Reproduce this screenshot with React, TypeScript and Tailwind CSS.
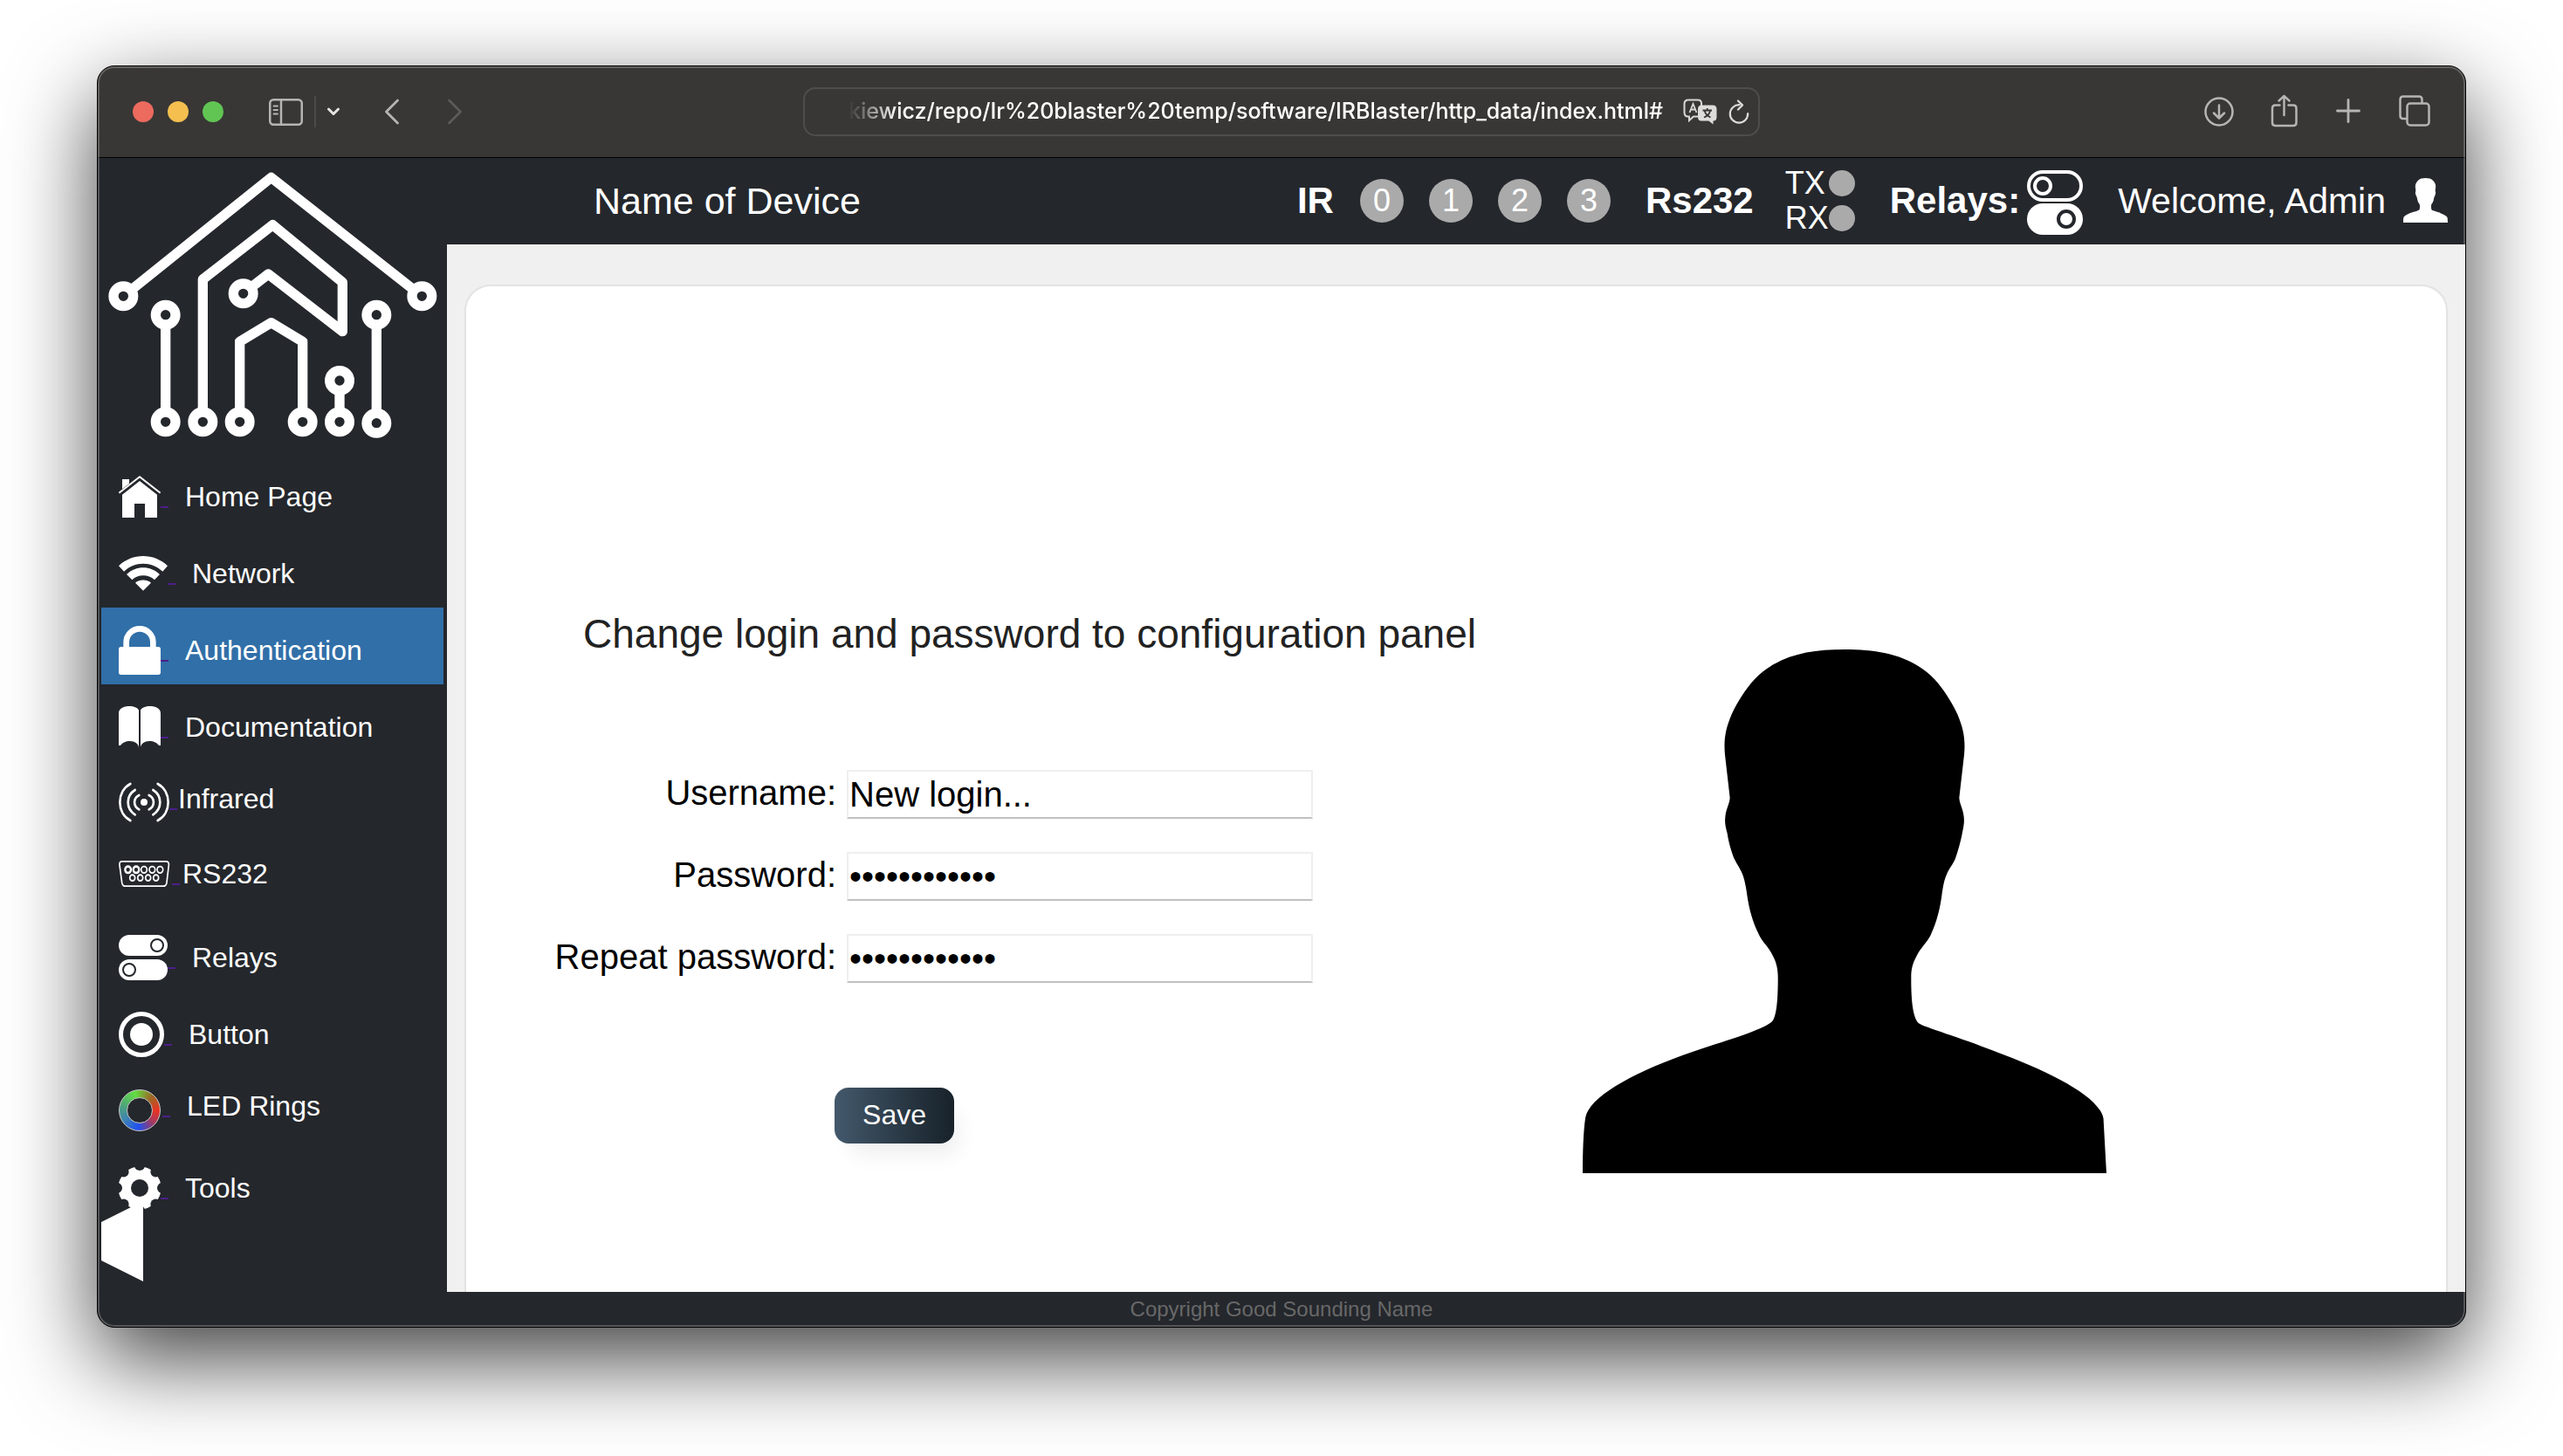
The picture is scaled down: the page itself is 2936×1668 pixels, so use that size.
import React from "react";

const SANS = "font-['Liberation_Sans',Arial,sans-serif]";

function Logo() {
  const rings: [number, number][] = [
    [124, 478],
    [1150, 478],
    [269, 542],
    [269, 910],
    [397, 910],
    [524, 910],
    [740, 910],
    [867, 910],
    [867, 768],
    [994, 542],
    [994, 914],
    [536, 469],
  ];
  return (
    <svg viewBox="36 3 1200 1017" className="block w-full" role="img" aria-label="Smart home logo">
      <g fill="none" stroke="#fff" strokeWidth="34" strokeLinejoin="round">
        <path d="M124 478 L632 70 L1150 478" />
        <path d="M269 542 V910 M994 542 V914 M867 768 V910" />
        <path d="M397 910 V420 L637 233 L877 430 V599 L622 402 L536 469" />
        <path d="M524 910 V634 L632 569 L740 634 V910" />
      </g>
      {rings.map(([x, y]) => (
        <circle key={x + "-" + y} cx={x} cy={y} r="34" fill="#24272c" stroke="#fff" strokeWidth="34" />
      ))}
    </svg>
  );
}

function HomeIcon() {
  return (
    <svg viewBox="108 72 144 144" className="h-12 w-12" fill="#fff" aria-hidden="true">
      <path d="M120 84 H144 V99 L120 118Z" />
      <path d="M180 90 L240 137 V216 H198 V168 H162 V216 H120 V137Z" />
      <path d="M109 131 L180 76 L251 131" fill="none" stroke="#fff" strokeWidth="6" />
    </svg>
  );
}

function WifiIcon() {
  return (
    <svg viewBox="108 336 168 144" className="h-12 w-14" fill="#fff" aria-hidden="true">
      <path d="M108 382 C155 337 229 337 276 382 L259 401 C221 365 163 365 126 401Z" />
      <path d="M135 411 C168 380 216 380 249 411 L231 430 C210 410 174 410 154 430Z" />
      <path d="M165 440 C180 427 204 427 219 440 L192 467Z" />
    </svg>
  );
}

function LockIcon() {
  return (
    <svg viewBox="108 588 144 168" className="h-14 w-12" fill="#fff" aria-hidden="true">
      <rect x="108" y="660" width="144" height="96" rx="8" />
      <path d="M134 664 V644 A46 46 0 0 1 226 644 V664" fill="none" stroke="#fff" strokeWidth="20" />
    </svg>
  );
}

function BookIcon() {
  return (
    <svg viewBox="108 864 144 144" className="h-12 w-12" fill="#fff" aria-hidden="true">
      <path d="M177 1007 C177 993 162 984 147 984 C132 984 120 990 114 999 L108 999 V888 C108 872 126 864 145 864 C160 864 172 869 177 877Z" />
      <path d="M183 1007 C183 993 198 984 213 984 C228 984 240 990 246 999 L252 999 V888 C252 872 234 864 215 864 C200 864 188 869 183 877Z" />
    </svg>
  );
}

function InfraredIcon() {
  return (
    <svg viewBox="108 1101 174 168" className="h-14 w-[58px]" fill="none" stroke="#fff" strokeWidth="8" strokeLinecap="round" aria-hidden="true">
      <circle cx="195" cy="1197" r="12" fill="#fff" stroke="none" />
      <path d="M148 1134 C100 1160 100 1234 148 1260 M242 1134 C290 1160 290 1234 242 1260" />
      <path d="M164 1155 C132 1175 132 1219 164 1240 M226 1155 C258 1175 258 1219 226 1240" />
      <path d="M178 1173 C157 1183 157 1211 178 1222 M212 1173 C233 1183 233 1211 212 1222" />
    </svg>
  );
}

function SerialIcon() {
  return (
    <svg viewBox="108 16 183 81" preserveAspectRatio="none" className="h-[30px] w-[61px]" fill="none" stroke="#fff" strokeWidth="5" aria-hidden="true">
      <path d="M120 18 H270 Q282 19 280 30 L273 84 Q271 95 262 95 H130 Q121 95 119 84 L111 30 Q109 19 120 18Z" />
      <circle cx="140" cy="44" r="10" strokeWidth="7" />
      <circle cx="168" cy="44" r="10" strokeWidth="7" />
      {[195, 223, 250].map((x) => (
        <circle key={x} cx={x} cy="44" r="10" />
      ))}
      {[155, 182, 209, 236].map((x) => (
        <circle key={x} cx={x} cy="69" r="9" />
      ))}
    </svg>
  );
}

function RelaysIcon() {
  return (
    <svg viewBox="0 0 56 52" className="h-[52px] w-14" fill="#fff" aria-hidden="true">
      <rect x="0" y="0" width="56" height="24" rx="12" />
      <rect x="0" y="28" width="56" height="24" rx="12" />
      <circle cx="44" cy="12" r="7" stroke="#24272c" strokeWidth="2" />
      <circle cx="12" cy="40" r="7" stroke="#24272c" strokeWidth="2" />
    </svg>
  );
}

function ButtonIcon() {
  return (
    <svg viewBox="0 0 52 52" className="h-[52px] w-[52px]" aria-hidden="true">
      <circle cx="26" cy="26" r="23.5" fill="none" stroke="#fff" strokeWidth="5" />
      <circle cx="26" cy="26" r="13" fill="#fff" />
    </svg>
  );
}

function LedIcon() {
  return (
    <span className="mt-[10px] flex h-12 w-[50px] items-center" aria-hidden="true">
      <span className="flex h-12 w-12 items-center justify-center rounded-full border border-[#c9c9c9] bg-[conic-gradient(from_-15deg,#62dd41,#9a6a25_55deg,#ea3323_105deg,#a83a5c_145deg,#1f50f0_200deg,#3f86b0_255deg,#4ea47c_300deg,#62dd41)]">
        <span className="h-[30px] w-[30px] rounded-full border border-[#c9c9c9] bg-[#24272c]" />
      </span>
    </span>
  );
}

function GearIcon() {
  const notches: [number, number][] = [
    [24, -2],
    [42.4, 5.6],
    [50, 24],
    [42.4, 42.4],
    [24, 50],
    [5.6, 42.4],
    [-2, 24],
    [5.6, 5.6],
  ];
  return (
    <svg viewBox="0 0 48 48" className="h-12 w-12" aria-hidden="true">
      <circle cx="24" cy="24" r="24.5" fill="#fff" />
      {notches.map(([x, y]) => (
        <circle key={x + "-" + y} cx={x} cy={y} r="6" fill="#24272c" />
      ))}
      <circle cx="24" cy="24" r="10" fill="#24272c" />
    </svg>
  );
}

const PERSON =
  "M76 1529 C76 1470 78 1410 83 1375 C92 1310 230 1235 395 1178 C480 1150 560 1122 577 1103 C590 1085 592 1030 592 980 C592 945 583 925 570 903 C560 887 549 877 541 858 C525 823 516 790 510 745 C506 715 502 697 495 682 C488 666 479 655 473 637 C465 613 461 595 458 575 C453 553 451 545 453 527 C455 507 465 490 465 475 L452 355 C448 310 454 280 470 240 C486 205 505 172 530 143 C590 77 670 59 768 59 C866 59 946 77 1006 143 C1031 172 1050 205 1066 240 C1082 280 1088 310 1084 355 L1071 475 C1071 490 1081 507 1083 527 C1085 545 1083 553 1078 580 C1074 600 1069 620 1061 645 C1054 664 1045 672 1038 690 C1032 704 1029 720 1026 740 C1021 785 1012 823 995 862 C985 882 968 898 958 920 C948 940 944 955 944 980 C944 1030 946 1090 964 1108 C975 1118 1080 1150 1160 1185 C1300 1240 1440 1310 1452 1375 L1460 1529Z";

function Person({ className }: { className: string }) {
  return (
    <svg viewBox="76 59 1384 1470" preserveAspectRatio="none" className={className} fill="currentColor" aria-hidden="true">
      <path d={PERSON} />
    </svg>
  );
}

type NavEntry = { label: string; icon: React.ReactNode; row: string; gap: string; active?: boolean };

const NAV: NavEntry[] = [
  { label: "Home Page", icon: <HomeIcon />, row: "h-[88px]", gap: "ml-[19px]" },
  { label: "Network", icon: <WifiIcon />, row: "h-[88px]", gap: "ml-[19px]" },
  { label: "Authentication", icon: <LockIcon />, row: "h-[88px] bg-[#316fa8]", gap: "ml-[19px]", active: true },
  { label: "Documentation", icon: <BookIcon />, row: "h-[88px]", gap: "ml-[19px]" },
  { label: "Infrared", icon: <InfraredIcon />, row: "h-[76px]", gap: "ml-px" },
  { label: "RS232", icon: <SerialIcon />, row: "h-24", gap: "ml-[3px]" },
  { label: "Relays", icon: <RelaysIcon />, row: "h-24", gap: "ml-[19px]" },
  { label: "Button", icon: <ButtonIcon />, row: "h-20", gap: "ml-[19px]" },
  { label: "LED Rings", icon: <LedIcon />, row: "h-[84px]", gap: "ml-[19px]" },
  { label: "Tools", icon: <GearIcon />, row: "h-[104px]", gap: "ml-[19px]" },
];

function Sidebar() {
  return (
    <aside className="w-[400px] shrink-0">
      <Logo />
      <nav className="px-1" aria-label="Main">
        {NAV.map((n) => (
          <a
            key={n.label}
            href="#"
            aria-current={n.active ? "page" : undefined}
            className={"flex items-center pt-[10px] pl-5 text-[32px] leading-10 text-white " + n.row}
          >
            {n.icon}
            <span className="mt-6 h-[2px] w-[9px] bg-[#4c1f8a]" />
            <span className={"whitespace-nowrap " + n.gap}>{n.label}</span>
          </a>
        ))}
        <button type="button" aria-label="Collapse menu" className="relative -mt-8 block">
          <svg viewBox="0 0 48 92" className="block h-[92px] w-12" fill="#fff" aria-hidden="true">
            <path d="M0 24 L48 0 V92 L0 68Z" />
          </svg>
        </button>
      </nav>
    </aside>
  );
}

function Toolbar() {
  return (
    <div className="grid h-[105px] grid-cols-[1fr_minmax(0,1096px)_1fr] items-center border-b border-black bg-[#383735] text-[#b5b5b3]">
      <div className="flex items-center pl-10">
        <div className="flex gap-4">
          <button type="button" aria-label="Close" className="h-6 w-6 rounded-full bg-[#ec6a5e]" />
          <button type="button" aria-label="Minimise" className="h-6 w-6 rounded-full bg-[#f4bf4f]" />
          <button type="button" aria-label="Zoom" className="h-6 w-6 rounded-full bg-[#61c554]" />
        </div>
        <button type="button" aria-label="Show sidebar" className="ml-[52px]">
          <svg viewBox="0 0 39 31" className="block h-[31px] w-[39px]" fill="none" stroke="currentColor" strokeWidth="2.5" aria-hidden="true">
            <rect x="1.25" y="1.25" width="36.5" height="28.5" rx="4" />
            <path d="M14 1 V30" />
            <path d="M5.5 8.5 H10 M5.5 13 H10 M5.5 17.5 H10" strokeWidth="1.8" strokeLinecap="round" />
          </svg>
        </button>
        <span className="ml-[13px] h-9 w-[2px] bg-[#4b4a48]" />
        <button type="button" aria-label="Tab groups" className="ml-3">
          <svg viewBox="0 0 16 10" className="block h-[10px] w-4" fill="none" stroke="#e4e4e2" strokeWidth="3" strokeLinecap="round" strokeLinejoin="round" aria-hidden="true">
            <path d="M2.5 2 L8 7.5 L13.5 2" />
          </svg>
        </button>
        <button type="button" aria-label="Back" className="ml-[50px]">
          <svg viewBox="0 0 18 30" className="block h-[30px] w-[18px]" fill="none" stroke="currentColor" strokeWidth="2.8" strokeLinecap="round" strokeLinejoin="round" aria-hidden="true">
            <path d="M15.5 2 L2.5 15 L15.5 28" />
          </svg>
        </button>
        <button type="button" aria-label="Forward" className="ml-[54px] text-[#5c5b59]">
          <svg viewBox="0 0 18 30" className="block h-[30px] w-[18px]" fill="none" stroke="currentColor" strokeWidth="2.8" strokeLinecap="round" strokeLinejoin="round" aria-hidden="true">
            <path d="M2.5 2 L15.5 15 L2.5 28" />
          </svg>
        </button>
      </div>

      <div className="flex h-14 items-center rounded-[14px] border-2 border-[#4e4d4b] pr-[10px] pl-[50px]">
        <input
          type="text"
          readOnly
          aria-label="Address"
          value="kiewicz/repo/Ir%20blaster%20temp/software/IRBlaster/http_data/index.html#"
          className="min-w-0 flex-1 bg-transparent font-['Inter',sans-serif] text-[25px] font-medium text-white outline-none [mask-image:linear-gradient(to_right,transparent,black_56px)]"
        />
        <button type="button" aria-label="Translate" className="ml-3">
          <svg viewBox="0 0 40 30" className="block h-[30px] w-10" aria-hidden="true">
            <path d="M6 1.5 H17 Q21 1.5 21 5.5 V17 Q21 20 17 20.5 L12 20.5 L7 25 V20.5 H6 Q1.5 20.5 1.5 16 V6 Q1.5 1.5 6 1.5Z" fill="none" stroke="#d8d8d6" strokeWidth="2" />
            <path d="M7.5 16 L11.5 6 L15.5 16 M9 12.5 H14" fill="none" stroke="#d8d8d6" strokeWidth="1.8" />
            <path d="M21 7.5 H34 Q38.5 7.5 38.5 12 V21 Q38.5 25.5 34.5 25.5 V29.5 L29.5 25.5 H21 Q17 25.5 17 21 V12 Q17 7.5 21 7.5Z" fill="#dcdcda" />
            <path d="M22.5 13.5 H33 M27.7 11 V13.5 M24 21.5 Q30 19 31 14 M31.5 21.5 Q26 19 24.7 14" fill="none" stroke="#383735" strokeWidth="1.8" />
          </svg>
        </button>
        <button type="button" aria-label="Reload" className="ml-3">
          <svg viewBox="0 0 24 28" className="block h-7 w-6" fill="none" stroke="#dcdcda" strokeWidth="2.2" strokeLinecap="round" strokeLinejoin="round" aria-hidden="true">
            <path d="M12.5 6.2 A10.2 10.2 0 1 0 22.2 16" />
            <path d="M11 1.5 L16 6.4 L11 11.5" />
          </svg>
        </button>
      </div>

      <div className="flex items-center justify-end pr-10">
        <button type="button" aria-label="Downloads">
          <svg viewBox="0 0 34 34" className="block h-[34px] w-[34px]" fill="none" stroke="currentColor" strokeWidth="2.5" strokeLinecap="round" strokeLinejoin="round" aria-hidden="true">
            <circle cx="17" cy="17" r="15.5" />
            <path d="M17 9.5 V24 M11 18.5 L17 24.5 L23 18.5" />
          </svg>
        </button>
        <button type="button" aria-label="Share" className="ml-[42px]">
          <svg viewBox="0 0 31 40" className="block h-10 w-[31px]" fill="none" stroke="currentColor" strokeWidth="2.5" strokeLinecap="round" strokeLinejoin="round" aria-hidden="true">
            <path d="M10.5 12.5 H5.5 Q2 12.5 2 16 V32.5 Q2 36 5.5 36 H26 Q29.5 36 29.5 32.5 V16 Q29.5 12.5 26 12.5 H20.5" />
            <path d="M15.5 24 V2 M9.5 7.5 L15.5 1.8 L21.5 7.5" />
          </svg>
        </button>
        <button type="button" aria-label="New tab" className="ml-11">
          <svg viewBox="0 0 28 30" className="block h-[30px] w-7" fill="none" stroke="currentColor" strokeWidth="2.8" strokeLinecap="round" aria-hidden="true">
            <path d="M14 1.5 V26.5 M1.5 14 H26.5" />
          </svg>
        </button>
        <button type="button" aria-label="Tab overview" className="ml-11">
          <svg viewBox="0 0 36 38" className="block h-[38px] w-9" fill="none" stroke="currentColor" strokeWidth="2.5" strokeLinejoin="round" aria-hidden="true">
            <rect x="9.5" y="9.5" width="25" height="25" rx="3.5" />
            <path d="M9.5 27 H5 Q1.5 27 1.5 23.5 V5 Q1.5 1.5 5 1.5 H23 Q26.5 1.5 26.5 5 V9.5" />
          </svg>
        </button>
      </div>
    </div>
  );
}

function Header() {
  return (
    <header className="flex h-[99px] shrink-0 items-center justify-between pr-5 pb-[2px] pl-[168px] text-[42px] leading-[48px] whitespace-nowrap text-white">
      <h1 className="text-[43px]">Name of Device</h1>
      <div className="flex items-center">
        <strong>IR</strong>
        <div className="ml-[30px] flex gap-[29px]">
          {[0, 1, 2, 3].map((n) => (
            <span key={n} className="flex h-[50px] w-[50px] items-center justify-center rounded-full bg-[#aaaaaa] text-[36px]">
              {n}
            </span>
          ))}
        </div>
        <strong className="ml-10">Rs232</strong>
        <div className="ml-9 text-[36px] leading-10">
          {["TX", "RX"].map((s) => (
            <div key={s} className="flex w-20 items-center justify-between">
              {s}
              <span className="h-[30px] w-[30px] rounded-full bg-[#aaaaaa]" />
            </div>
          ))}
        </div>
        <strong className="ml-10">Relays:</strong>
        <svg viewBox="0 -4 64 78" className="ml-2 h-[78px] w-16" aria-hidden="true">
          <rect x="2" y="2" width="60" height="32" rx="16" fill="none" stroke="#fff" strokeWidth="4" />
          <circle cx="18" cy="18" r="9" fill="none" stroke="#fff" strokeWidth="4" />
          <rect x="0" y="38" width="64" height="36" rx="18" fill="#fff" />
          <circle cx="45" cy="56" r="9" fill="#fff" stroke="#24272c" strokeWidth="4" />
        </svg>
        <span className="ml-10 text-[41px]">Welcome, Admin</span>
        <Person className="ml-5 h-[51px] w-[51px] text-white" />
      </div>
    </header>
  );
}

const FIELDS = [
  { id: "username", label: "Username:", type: "text", value: "New login..." },
  { id: "password", label: "Password:", type: "password", value: "New password" },
  { id: "repeat", label: "Repeat password:", type: "password", value: "New password" },
];

function Content() {
  return (
    <main className="flex flex-1 flex-col bg-[#f0f0f0] px-5 pt-[46px]">
      <section className="flex flex-1 items-start rounded-t-[30px] border-2 border-b-0 border-[#e3e3e3] bg-white pt-[370px] pl-[100px]">
        <form className="flex flex-col" onSubmit={(e) => e.preventDefault()}>
          <h2 className="ml-[34px] text-[46px] leading-[56px] whitespace-nowrap text-[#222222]">
            Change login and password to configuration panel
          </h2>
          <div className="mt-32 flex flex-col gap-[38px] text-[40px] text-black">
            {FIELDS.map((f) => (
              <div key={f.id} className="flex h-14 items-center">
                <label htmlFor={f.id} className="w-[324px] pb-1 text-right whitespace-nowrap">
                  {f.label}
                </label>
                <input
                  id={f.id}
                  type={f.type}
                  defaultValue={f.value}
                  className="ml-3 h-14 w-[534px] border-2 border-[#efefef] border-b-[#c0c0c0] bg-white px-px outline-none"
                />
              </div>
            ))}
          </div>
          <button
            type="submit"
            className="mt-[120px] ml-[322px] h-16 w-[137px] rounded-2xl bg-linear-to-r from-[#43596c] to-[#18222a] pb-[2px] text-[32px] text-white shadow-[12px_20px_24px_-8px_rgba(0,0,0,0.07)]"
          >
            Save
          </button>
        </form>
        <Person className="mt-[46px] ml-[122px] h-[600px] w-[600px] shrink-0 text-black" />
      </section>
    </main>
  );
}

export default function App() {
  return (
    <div className={"flex min-h-screen flex-col bg-white px-[111px] pt-[75px] pb-[147px] " + SANS}>
      <div className="relative flex flex-1 flex-col overflow-hidden rounded-[20px] border border-black bg-[#24272c] shadow-[0_36px_100px_rgba(0,0,0,0.75)]">
        <Toolbar />
        <div className="flex flex-1">
          <Sidebar />
          <div className="flex min-w-0 flex-1 flex-col">
            <Header />
            <Content />
          </div>
        </div>
        <footer className="flex h-10 items-center justify-center text-[24px] text-[#686868]">
          Copyright Good Sounding Name
        </footer>
        <div className="pointer-events-none absolute inset-0 rounded-[19px] shadow-[inset_0_0_0_2px_rgba(255,255,255,0.22)]" />
      </div>
    </div>
  );
}
